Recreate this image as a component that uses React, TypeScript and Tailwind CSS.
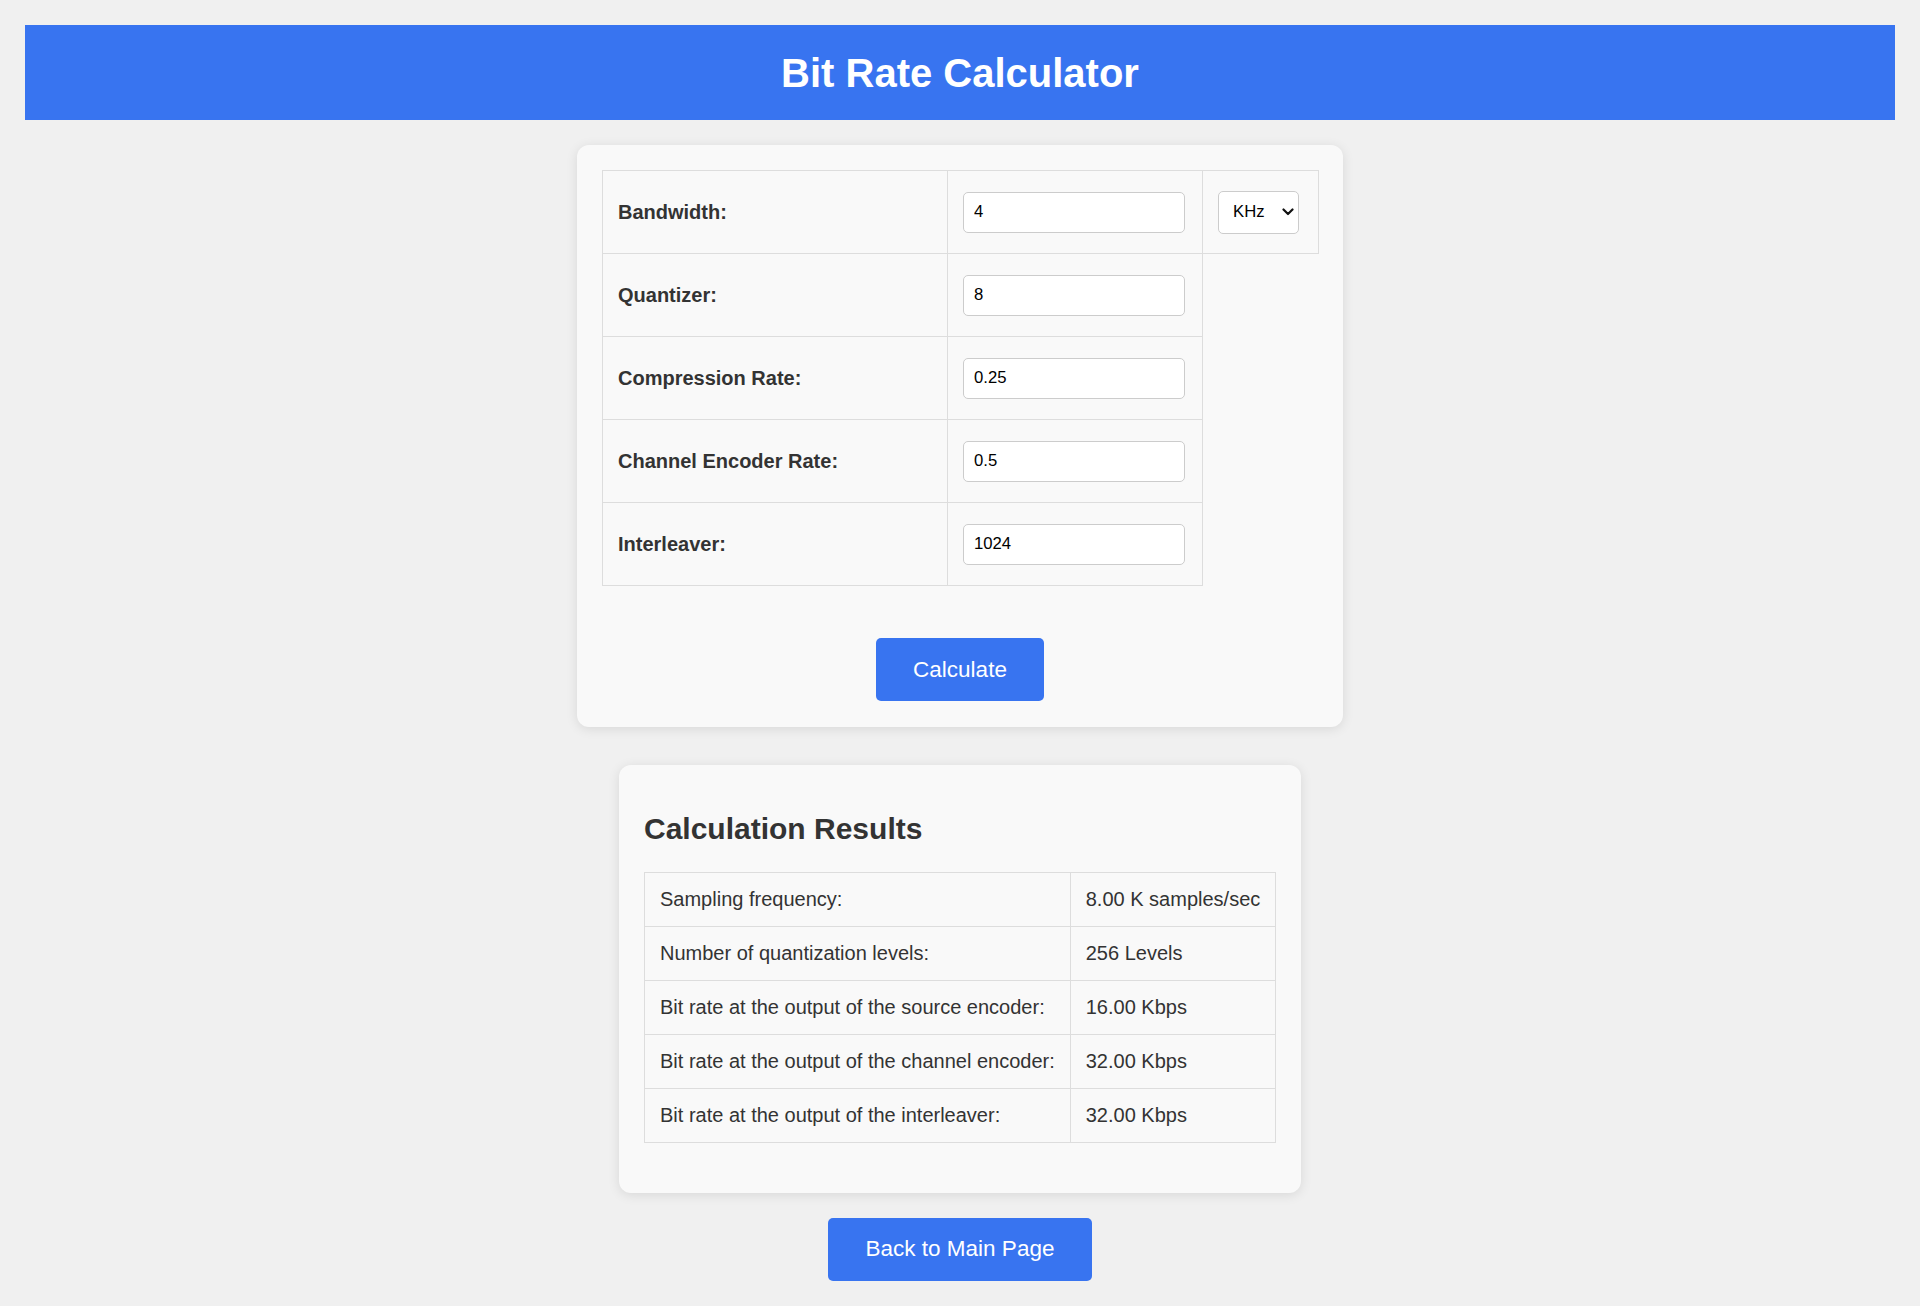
import React from "react";

const rows = [
  { label: "Bandwidth:", value: "4", unit: true },
  { label: "Quantizer:", value: "8" },
  { label: "Compression Rate:", value: "0.25" },
  { label: "Channel Encoder Rate:", value: "0.5" },
  { label: "Interleaver:", value: "1024" },
];

const results = [
  ["Sampling frequency:", "8.00 K samples/sec"],
  ["Number of quantization levels:", "256 Levels"],
  ["Bit rate at the output of the source encoder:", "16.00 Kbps"],
  ["Bit rate at the output of the channel encoder:", "32.00 Kbps"],
  ["Bit rate at the output of the interleaver:", "32.00 Kbps"],
];

export default function App() {
  return (
    <div className="min-h-screen bg-[#f0f0f0] p-[25px] font-['Liberation_Sans',Arial,sans-serif] text-[#333]">
      <header className="flex h-[95px] w-full items-center justify-center bg-[#3874f0]">
        <h1 className="text-[40px] font-bold leading-[46px] text-white">Bit Rate Calculator</h1>
      </header>

      <div className="mx-auto mt-[25px] w-[766px] rounded-[12px] bg-[#f9f9f9] px-[25px] pb-[26px] pt-[25px] shadow-[0_2px_12px_rgba(0,0,0,0.1)]">
        <table className="w-[716px] table-fixed border-collapse">
          <colgroup>
            <col className="w-[345px]" />
            <col className="w-[255px]" />
            <col className="w-[116px]" />
          </colgroup>
          <tbody>
            {rows.map((r) => (
              <tr key={r.label} className="h-[83px]">
                <td className="border border-[#ddd] px-[15px] py-0 align-middle text-[20px] font-bold leading-[23px] text-[#333]">
                  {r.label}
                </td>
                <td className="border border-[#ddd] px-[15px] py-0 align-middle">
                  <input
                    type="text"
                    defaultValue={r.value}
                    className="block h-[41px] w-[222px] rounded-[5px] border border-[#ccc] bg-white px-[10px] text-[16.7px] text-black outline-none"
                  />
                </td>
                {r.unit ? (
                  <td className="border border-[#ddd] px-[15px] py-0 align-middle">
                    <div className="relative h-[43px] w-[81px]">
                      <select
                        defaultValue="KHz"
                        className="block h-[43px] w-[81px] appearance-none rounded-[5px] border border-[#ccc] bg-white pl-[14px] text-[16.7px] text-black outline-none"
                      >
                        <option>Hz</option>
                        <option>KHz</option>
                        <option>MHz</option>
                      </select>
                      <svg
                        className="pointer-events-none absolute left-[64px] top-[17px]"
                        width="12"
                        height="8"
                        viewBox="0 0 12 8"
                        fill="none"
                      >
                        <path d="M1.5 1.5 L6 6 L10.5 1.5" stroke="#111" strokeWidth="2.2" strokeLinecap="round" strokeLinejoin="round" />
                      </svg>
                    </div>
                  </td>
                ) : null}
              </tr>
            ))}
          </tbody>
        </table>
        <div className="mt-[52px] flex justify-center">
          <button className="h-[63px] w-[168px] rounded-[5px] bg-[#3874f0] text-[22.5px] text-white">Calculate</button>
        </div>
      </div>

      <div className="mx-auto mt-[38px] w-[682px] rounded-[12px] bg-[#f9f9f9] px-[25px] pb-[50px] pt-[25px] shadow-[0_2px_12px_rgba(0,0,0,0.1)]">
        <h2 className="mb-[25px] mt-[22px] text-[30px] font-bold leading-[34.5px] text-[#333]">Calculation Results</h2>
        <table className="w-[632px] border-collapse">
          <tbody>
            {results.map(([k, v]) => (
              <tr key={k} className="h-[54px]">
                <td className="w-[426px] whitespace-nowrap border border-[#ddd] px-[15px] py-0 align-middle text-[20px] leading-[23px]">{k}</td>
                <td className="whitespace-nowrap border border-[#ddd] px-[15px] py-0 align-middle text-[20px] leading-[23px]">{v}</td>
              </tr>
            ))}
          </tbody>
        </table>
      </div>

      <div className="mt-[25px] flex justify-center">
        <button className="h-[63px] w-[264px] rounded-[5px] bg-[#3874f0] text-[22.5px] text-white">Back to Main Page</button>
      </div>
    </div>
  );
}
